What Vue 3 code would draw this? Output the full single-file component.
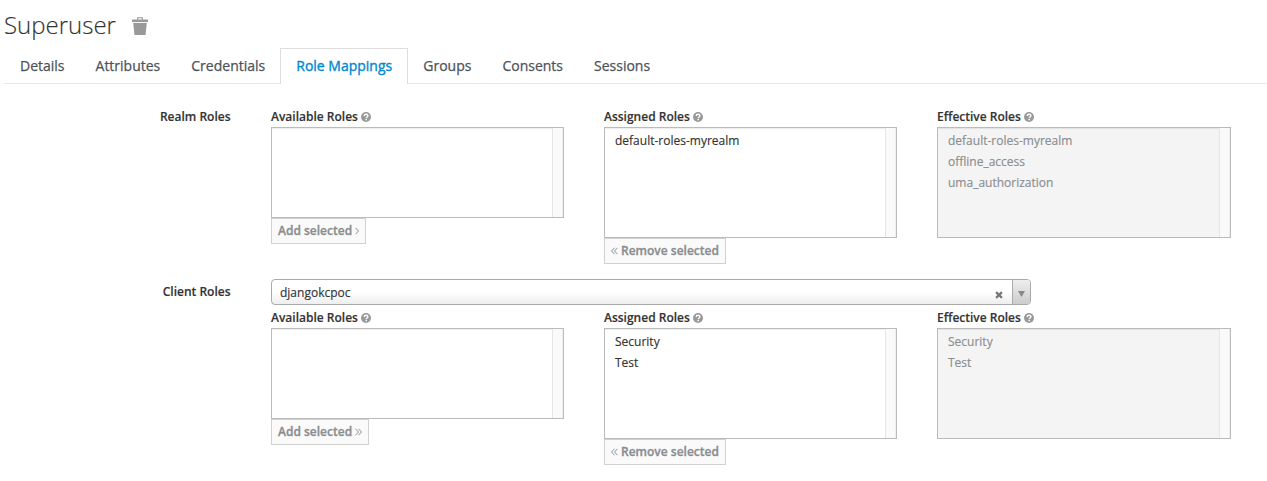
<script setup>
const tabs = ['Details', 'Attributes', 'Credentials', 'Role Mappings', 'Groups', 'Consents', 'Sessions']

const sections = [
  {
    name: 'Realm Roles',
    client: null,
    columns: [
      { title: 'Available Roles', kind: 'available', roles: [], arrow: 'single' },
      { title: 'Assigned Roles', kind: 'assigned', roles: ['default-roles-myrealm'] },
      { title: 'Effective Roles', kind: 'effective', roles: ['default-roles-myrealm', 'offline_access', 'uma_authorization'] },
    ],
  },
  {
    name: 'Client Roles',
    client: 'djangokcpoc',
    columns: [
      { title: 'Available Roles', kind: 'available', roles: [], arrow: 'double' },
      { title: 'Assigned Roles', kind: 'assigned', roles: ['Security', 'Test'] },
      { title: 'Effective Roles', kind: 'effective', roles: ['Security', 'Test'] },
    ],
  },
]
</script>

<template>
  <main class="page">
    <h1 class="title">
      <span>Superuser</span>
      <svg class="trash" width="16" height="18" viewBox="0 0 16 18">
        <path d="M5 3V.6Q5 0 5.600 0h4.800q.6 0 .6.600V3H9.700V1.300H6.300V3z" fill="#aaa" />
        <path d="M0 2.500h16v2.600H0z" fill="#999" />
        <path d="M1.200 6h13.600l-1.300 12h-11z" fill="#999" />
      </svg>
    </h1>

    <nav class="tabs">
      <a v-for="tab in tabs" :key="tab" class="tab" :class="{ active: tab === 'Role Mappings' }">{{ tab }}</a>
    </nav>

    <section v-for="section in sections" :key="section.name" class="group">
      <div class="group-label" :class="{ client: section.client }">{{ section.name }}</div>
      <div class="content">
        <div v-if="section.client" class="picker">
          <span class="picker-value">{{ section.client }}</span>
          <svg class="clear" width="8" height="8" viewBox="0 0 8 8">
            <path d="M1.100 1.100l5.800 5.800M6.900 1.100L1.100 6.900" stroke="#777" stroke-width="2.200" />
          </svg>
          <span class="picker-arrow">
            <svg width="7" height="6" viewBox="0 0 7 6"><path d="M0 0h7L3.500 6z" fill="#888" /></svg>
          </span>
        </div>
        <div class="columns">
          <div v-for="col in section.columns" :key="col.title" class="column">
            <div class="col-label">
              <span>{{ col.title }}</span>
              <svg class="help" width="10" height="10" viewBox="0 0 10 10">
                <circle cx="5" cy="5" r="5" fill="#999" />
                <path d="M3.200 3.900C3.200 1.700 6.900 1.700 6.900 3.800C6.900 5 5.200 4.900 5.200 6.200" fill="none" stroke="#fff" stroke-width="1.350" />
                <path d="M4.450 6.900h1.500v1.400h-1.500z" fill="#fff" />
              </svg>
            </div>
            <div class="list" :class="col.kind">
              <div class="options">
                <div v-for="role in col.roles" :key="role" class="option">{{ role }}</div>
              </div>
              <div class="track"></div>
            </div>
            <button v-if="col.kind === 'available'" class="btn" disabled>
              <span>Add selected</span>
              <svg v-if="col.arrow === 'single'" width="4" height="8" viewBox="0 0 4 8">
                <path d="M.5 .8L3.500 4L.5 7.200" />
              </svg>
              <svg v-else width="7" height="8" viewBox="0 0 7 8">
                <path d="M.5 .8L3.500 4L.5 7.200M3.500 .8L6.500 4L3.500 7.200" />
              </svg>
            </button>
            <button v-if="col.kind === 'assigned'" class="btn" disabled>
              <svg width="7" height="8" viewBox="0 0 7 8">
                <path d="M3.500 .8L.5 4L3.500 7.200M6.500 .8L3.500 4L6.500 7.200" />
              </svg>
              <span>Remove selected</span>
            </button>
          </div>
        </div>
      </div>
    </section>
  </main>
</template>

<style>
body {
  background: #fff;
}
</style>

<style scoped>
.page {
  box-sizing: border-box;
  height: 481px;
  padding-left: 4px;
  overflow: hidden;
  font-family: "Open Sans", sans-serif;
  font-size: 12px;
  line-height: 20px;
  color: #333;
  -webkit-text-stroke: 0.15px currentColor;
}
.title {
  display: flex;
  align-items: center;
  gap: 16px;
  height: 48px;
  margin: 0;
  padding-top: 2px;
  box-sizing: border-box;
  font-size: 24px;
  font-weight: 300;
}
.trash {
  margin-top: 2px;
}
.tabs {
  display: flex;
  height: 35px;
  border-bottom: 1px solid #e9e9e9;
}
.tab {
  box-sizing: border-box;
  height: 36px;
  margin-right: -1px;
  padding: 7px 15px 0;
  border: 1px solid transparent;
  border-bottom: 0;
  font-size: 14px;
  color: #4d5258;
  -webkit-text-stroke: 0.25px currentColor;
}
.tab.active {
  border-color: #ddd;
  background: #fff;
  color: #0088ce;
  -webkit-text-stroke: 0.35px #0088ce;
}
.group {
  display: flex;
  margin-top: 23px;
}
.group + .group {
  margin-top: 15px;
}
.group-label {
  width: 226.500px;
  margin-right: 40.500px;
  flex: none;
  text-align: right;
  font-weight: 600;
}
.group-label.client {
  padding-top: 3px;
}
.content {
  width: 960px;
}
.columns {
  display: grid;
  grid-template-columns: 293px 293px 294px;
  column-gap: 40px;
}
.col-label {
  display: flex;
  align-items: center;
  gap: 3px;
  height: 20px;
  font-weight: 600;
}
.list {
  box-sizing: border-box;
  display: flex;
  height: 111px;
  border: 1px solid #bbb;
  box-shadow: inset 0 1px 1px rgba(0, 0, 0, 0.075);
}
.list.available {
  height: 91px;
}
.list.effective {
  background: #f4f4f4;
  color: #8b8d8f;
}
.options {
  flex: 1;
  padding: 3px 10px;
}
.option {
  height: 21px;
}
.track {
  box-sizing: border-box;
  width: 11px;
  border-left: 1px solid #e6e6e6;
  border-right: 1px solid #eee;
  background: #fafafa;
}
.btn {
  box-sizing: border-box;
  display: flex;
  align-items: center;
  gap: 3px;
  width: max-content;
  height: 26px;
  padding: 0 6px;
  border: 1px solid #d1d1d1;
  background: #fafafa;
  font: 600 12px/20px "Open Sans", sans-serif;
  color: #8b8d8f;
  -webkit-text-stroke: 0.3px currentColor;
}
.btn path {
  fill: none;
  stroke: #8b8d8f;
}
.picker {
  box-sizing: border-box;
  display: flex;
  align-items: center;
  width: 760px;
  height: 26px;
  margin-bottom: 3px;
  padding-left: 8px;
  overflow: hidden;
  border: 1px solid #aaa;
  border-radius: 4px;
  background: linear-gradient(#fff 50%, #eee);
}
.picker-value {
  flex: 1;
  padding-top: 2px;
}
.clear {
  margin: 6px 9px 0 0;
}
.picker-arrow {
  display: flex;
  align-items: center;
  justify-content: center;
  width: 18px;
  height: 24px;
  padding: 3px 1px 0 0;
  box-sizing: border-box;
  border-left: 1px solid #aaa;
  background: linear-gradient(#eee, #ccc);
}
</style>
